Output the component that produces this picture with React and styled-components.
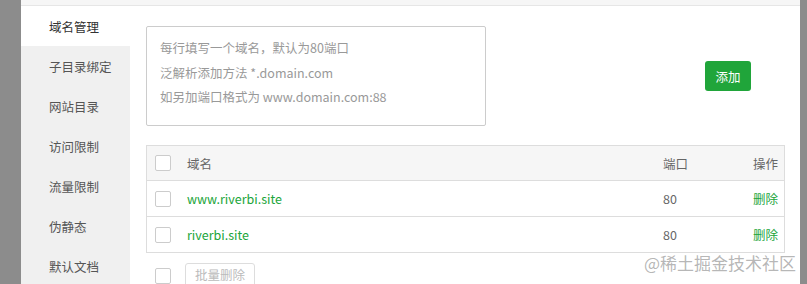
import React from 'react';
import styled, {createGlobalStyle} from 'styled-components';

const Global = createGlobalStyle`
    html, body {
        margin: 0;
        padding: 0;
        overflow: hidden;
        background: #8c8c8c;
    }
    body {
        font-family: "Noto Sans CJK SC", "Noto Sans", sans-serif;
        font-size: 12px;
        color: #555;
    }
`;

const Frame = styled.div`
    display: flex;
    height: 284px;
    width: 807px;
    position: relative;
`;

const Strip = styled.div`
    width: ${p => p.w}px;
    background: #8c8c8c;
    flex-shrink: 0;
`;

const Panel = styled.div`
    flex: 1;
    display: flex;
    flex-direction: column;
    background: #fff;
    overflow: hidden;
`;

const TopBar = styled.div`
    height: 5px;
    background: #f6f6f6;
    border-bottom: 1px solid #e6e6e6;
    flex-shrink: 0;
`;

const Body = styled.div`
    flex: 1;
    display: flex;
`;

const Sidebar = styled.ul`
    width: 109px;
    margin: 0;
    padding: 0;
    list-style: none;
    background: #f0f0f0;
`;

const NavItem = styled.li`
    height: 40px;
    line-height: 42px;
    padding-left: 28px;
    font-size: 12.5px;
    color: ${p => p.active ? '#333' : '#555'};
    background: ${p => p.active ? '#fff' : 'transparent'};
`;

const Content = styled.div`
    flex: 1;
    padding: 20px 15px 0 16px;
`;

const AddRow = styled.div`
    display: flex;
    align-items: center;
`;

const Hint = styled.div`
    box-sizing: border-box;
    width: 340px;
    height: 100px;
    border: 1px solid #ccc;
    border-radius: 2px;
    padding: 9px 13px;
    font-size: 12.5px;
    line-height: 24.5px;
    color: #999;
`;

const GreenButton = styled.button`
    margin-left: 219px;
    width: 46px;
    height: 30px;
    border: none;
    border-radius: 3px;
    background: #20a53a;
    color: #fff;
    font-family: inherit;
    font-size: 12.5px;
    padding: 0;
`;

const Table = styled.div`
    margin-top: 19px;
    width: 639px;
    border: 1px solid #ddd;
    box-sizing: border-box;
`;

const Row = styled.div`
    display: grid;
    grid-template-columns: 32px 476px 1fr auto;
    align-items: center;
    height: ${p => p.head ? 34 : 35}px;
    background: ${p => p.head ? '#f6f6f6' : '#fff'};
    border-top: ${p => p.first ? 'none' : '1px solid #ddd'};
    padding: 0 6px 0 8px;
    font-size: 12.5px;
    color: #666;
`;

const Check = styled.span`
    display: block;
    width: 16px;
    height: 16px;
    border: 1px solid #ccc;
    border-radius: 2px;
    box-sizing: border-box;
    background: #fff;
`;

const Domain = styled.span`
    color: #20a53a;
`;

const Action = styled.span`
    text-align: right;
    color: ${p => p.link ? '#20a53a' : '#666'};
`;

const Footer = styled.div`
    display: flex;
    align-items: flex-start;
    gap: 14px;
    margin-top: 10px;
    padding-left: 9px;
`;

const FooterCheck = styled(Check)`
    margin-top: 5px;
`;

const GhostButton = styled.button`
    box-sizing: border-box;
    width: 70px;
    height: 30px;
    border: 1px solid #ddd;
    border-radius: 3px;
    background: #fff;
    color: #bbb;
    font-family: inherit;
    font-size: 12.5px;
    padding: 0 0 8px;
`;

const Watermark = styled.div`
    position: absolute;
    left: 644px;
    top: 250px;
    font-size: 17px;
    color: rgba(120, 120, 120, 0.55);
    white-space: nowrap;
`;

const navs = ['域名管理', '子目录绑定', '网站目录', '访问限制', '流量限制', '伪静态', '默认文档'];
const domains = [
    {name: 'www.riverbi.site', port: 80},
    {name: 'riverbi.site', port: 80},
];

export default function App() {
    return (
        <Frame>
            <Global />
            <Strip w={21} />
            <Panel>
                <TopBar />
                <Body>
                    <Sidebar>
                        {navs.map((n, i) => (
                            <NavItem key={n} active={i === 0}>{n}</NavItem>
                        ))}
                    </Sidebar>
                    <Content>
                        <AddRow>
                            <Hint>
                                <div>每行填写一个域名，默认为80端口</div>
                                <div>泛解析添加方法 *.domain.com</div>
                                <div>如另加端口格式为 www.domain.com:88</div>
                            </Hint>
                            <GreenButton>添加</GreenButton>
                        </AddRow>
                        <Table>
                            <Row head first>
                                <Check />
                                <span>域名</span>
                                <span>端口</span>
                                <Action>操作</Action>
                            </Row>
                            {domains.map(d => (
                                <Row key={d.name}>
                                    <Check />
                                    <Domain>{d.name}</Domain>
                                    <span>{d.port}</span>
                                    <Action link>删除</Action>
                                </Row>
                            ))}
                        </Table>
                        <Footer>
                            <FooterCheck />
                            <GhostButton>批量删除</GhostButton>
                        </Footer>
                    </Content>
                </Body>
            </Panel>
            <Strip w={7} />
            <Watermark>@稀土掘金技术社区</Watermark>
        </Frame>
    );
}
